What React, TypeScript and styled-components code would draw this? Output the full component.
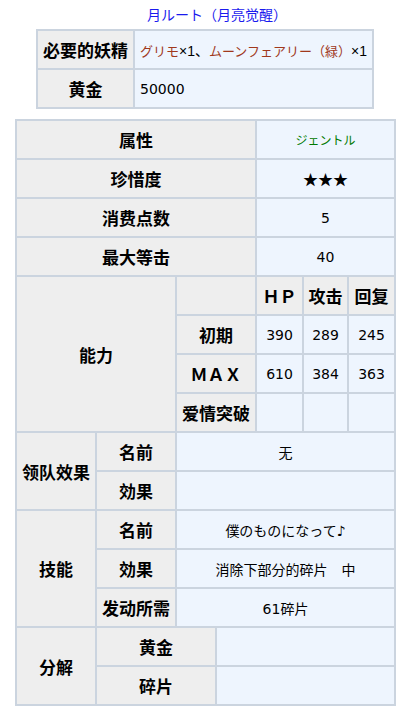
import React from 'react'
import styled, { createGlobalStyle } from 'styled-components';

const GlobalStyle = createGlobalStyle`
    body {
        margin: 0;
        background: #ffffff;
        font-family: "DejaVu Sans", "Noto Sans CJK JP", sans-serif;
        color: #000000;
    }
`;

// stats for the card, in table order
const stats = [
    { label: "初期", hp: "390", atk: "289", heal: "245" },
    { label: "ＭＡＸ", hp: "610", atk: "384", heal: "363" },
    { label: "爱情突破", hp: "", atk: "", heal: "" },
];

const App = () => {
    return (
        <>
        <GlobalStyle />
        <Page>
            <Title>月ルート（月亮觉醒）</Title>

            <CostTable>
                <colgroup>
                    <col style={{ width: 97 }} />
                    <col />
                </colgroup>
                <tbody>
                    <tr>
                        <Th>必要的妖精</Th>
                        <Td $align="left">
                            <FairyName>グリモ</FairyName><Count>×1、</Count><FairyName>ムーンフェアリー（緑）</FairyName><Count>×1</Count>
                        </Td>
                    </tr>
                    <tr>
                        <Th>黄金</Th>
                        <Td $align="left">50000</Td>
                    </tr>
                </tbody>
            </CostTable>

            <InfoTable>
                <colgroup>
                    {[80, 80, 40, 40, 47, 45, 47].map((w, i) => <col key={i} style={{ width: w }} />)}
                </colgroup>
                <tbody>
                    <tr>
                        <Th colSpan={4}>属性</Th>
                        <Td colSpan={3}><Attribute>ジェントル</Attribute></Td>
                    </tr>
                    <tr>
                        <Th colSpan={4}>珍惜度</Th>
                        <Td colSpan={3}><Stars>★★★</Stars></Td>
                    </tr>
                    <tr>
                        <Th colSpan={4}>消费点数</Th>
                        <Td colSpan={3}>5</Td>
                    </tr>
                    <tr>
                        <Th colSpan={4}>最大等击</Th>
                        <Td colSpan={3}>40</Td>
                    </tr>

                    <tr>
                        <Th colSpan={2} rowSpan={4}>能力</Th>
                        <Th colSpan={2}></Th>
                        <Th>ＨＰ</Th>
                        <Th>攻击</Th>
                        <Th>回复</Th>
                    </tr>
                    {stats.map((row) => (
                        <tr key={row.label}>
                            <Th colSpan={2}>{row.label}</Th>
                            <Td>{row.hp}</Td>
                            <Td>{row.atk}</Td>
                            <Td>{row.heal}</Td>
                        </tr>
                    ))}

                    <tr>
                        <Th rowSpan={2}>领队效果</Th>
                        <Th>名前</Th>
                        <Td colSpan={5}>无</Td>
                    </tr>
                    <tr>
                        <Th>効果</Th>
                        <Td colSpan={5}></Td>
                    </tr>

                    <tr>
                        <Th rowSpan={3}>技能</Th>
                        <Th>名前</Th>
                        <Td colSpan={5}>僕のものになって♪</Td>
                    </tr>
                    <tr>
                        <Th>効果</Th>
                        <Td colSpan={5}>消除下部分的碎片　中</Td>
                    </tr>
                    <tr>
                        <Th>发动所需</Th>
                        <Td colSpan={5}>61碎片</Td>
                    </tr>

                    <tr>
                        <Th rowSpan={2}>分解</Th>
                        <Th colSpan={2}>黄金</Th>
                        <Td colSpan={4}></Td>
                    </tr>
                    <tr>
                        <Th colSpan={2}>碎片</Th>
                        <Td colSpan={4}></Td>
                    </tr>
                </tbody>
            </InfoTable>
        </Page>
        </>
    )
};

const Page = styled.div`
    padding: 6px 0 6px 0;
    width: 406px;
`;

const Title = styled.div`
    color: #1a1aee;
    font-size: 14px;
    line-height: 16px;
    font-family: "Noto Sans CJK JP", sans-serif;
    padding-left: 147px;
    margin-bottom: 7px;
    white-space: nowrap;
`;

const BaseTable = styled.table`
    border-collapse: collapse;
    table-layout: fixed;
    border: 2px solid #cbd4df;
`;

const CostTable = styled(BaseTable)`
    width: 338px;
    margin-left: 36px;
`;

const InfoTable = styled(BaseTable)`
    width: 380px;
    margin-left: 15px;
    margin-top: 10px;
`;

const Th = styled.th`
    background: #eeeeee;
    border: 2px solid #cbd4df;
    height: 37px;
    padding: 0 2px;
    font-family: "Noto Sans CJK SC", sans-serif;
    font-weight: 700;
    font-size: 17px;
    text-align: center;
    vertical-align: middle;
    white-space: nowrap;
`;

const Td = styled.td<{ $align?: string }>`
    background: #eef5fe;
    border: 2px solid #cbd4df;
    height: 37px;
    padding: ${(p) => (p.$align === 'left' ? '0 0 0 5px' : '0')};
    font-size: 14px;
    text-align: ${(p) => p.$align || 'center'};
    vertical-align: middle;
    white-space: nowrap;
`;

const FairyName = styled.span`
    color: #a0381c;
    font-family: "Noto Sans CJK JP", sans-serif;
    font-size: 13px;
`;

const Count = styled.span`
    color: #000000;
    font-family: "Liberation Sans", "Noto Sans CJK JP", sans-serif;
    font-size: 14px;
`;

const Attribute = styled.span`
    color: #007a00;
    font-size: 12px;
`;

const Stars = styled.span`
    font-family: "Noto Sans CJK JP", sans-serif;
    font-size: 15px;
`;

export default App
